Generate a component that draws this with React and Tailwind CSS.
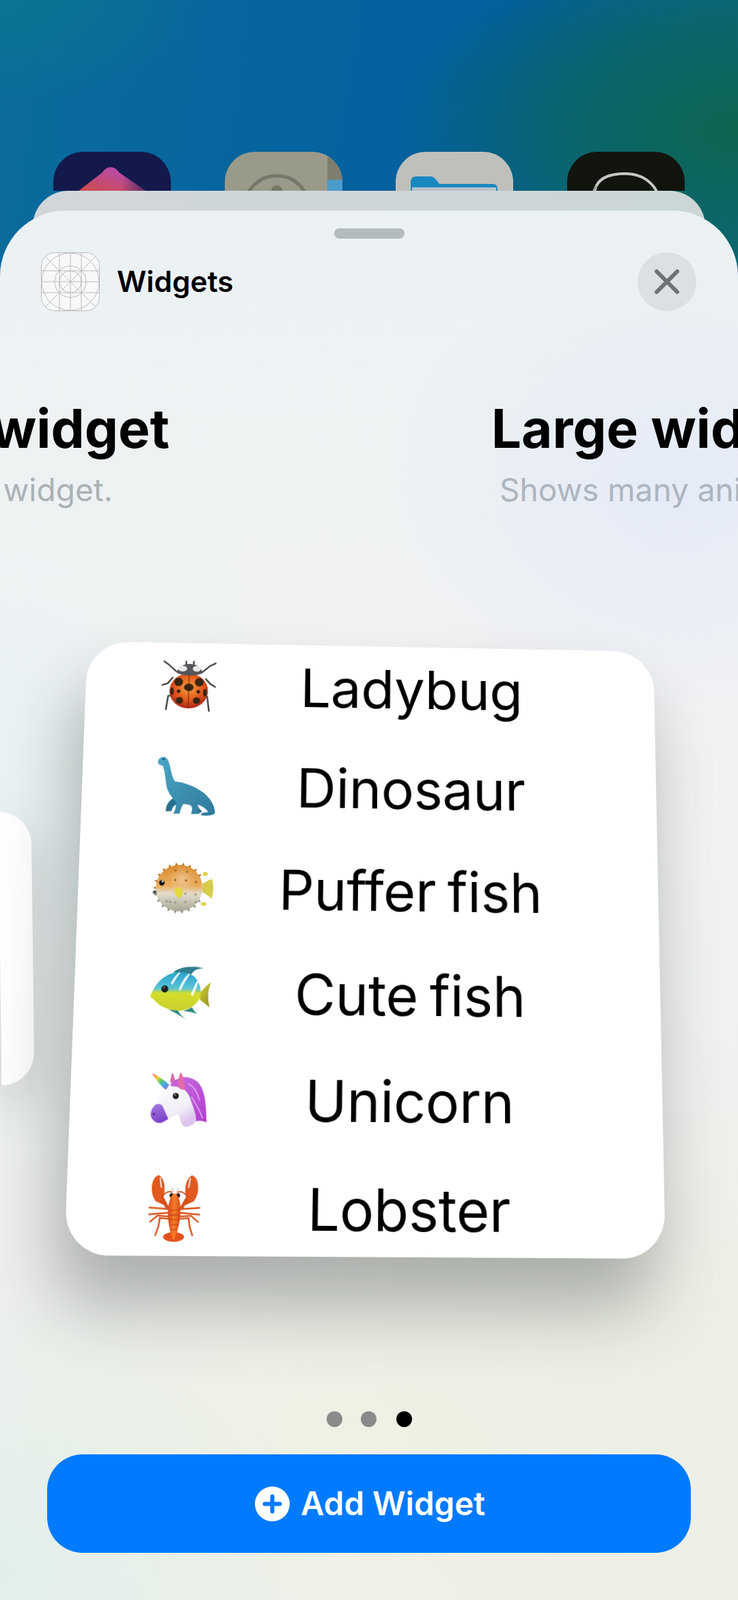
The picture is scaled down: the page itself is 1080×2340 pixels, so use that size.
import React from "react";

function quadMatrix(W, H, q) {
  const [[x0, y0], [x1, y1], [x2, y2], [x3, y3]] = q;
  const dx1 = x1 - x2, dx2 = x3 - x2, sx = x0 - x1 + x2 - x3;
  const dy1 = y1 - y2, dy2 = y3 - y2, sy = y0 - y1 + y2 - y3;
  const den = dx1 * dy2 - dx2 * dy1;
  const g = (sx * dy2 - dx2 * sy) / den;
  const h = (dx1 * sy - sx * dy1) / den;
  const a = (x1 - x0 + g * x1) / W, b = (x3 - x0 + h * x3) / H;
  const d = (y1 - y0 + g * y1) / W, e = (y3 - y0 + h * y3) / H;
  return `matrix3d(${a},${d},0,${g / W},${b},${e},0,${h / H},0,0,1,0,${x0},${y0},0,1)`;
}

const CARD_X = 100, CARD_Y = 940;
const cardTransform = quadMatrix(880, 920, [
  [128 - CARD_X, 938 - CARD_Y],
  [956 - CARD_X, 953 - CARD_Y],
  [974 - CARD_X, 1841 - CARD_Y],
  [94 - CARD_X, 1836 - CARD_Y],
]);

function Ladybug() {
  return (
    <svg width="86" height="84" viewBox="165 98 244 236">
      <defs>
        <radialGradient id="lb" cx="0.5" cy="0.4" r="0.65">
          <stop offset="0" stopColor="#f5a03e" />
          <stop offset="0.55" stopColor="#e2581c" />
          <stop offset="1" stopColor="#a01c10" />
        </radialGradient>
      </defs>
      <g fill="none" stroke="#3e3e3e" strokeWidth="7" strokeLinecap="round" strokeLinejoin="round">
        <path d="M177 107 L198 122 L232 152" />
        <path d="M402 112 L378 124 L345 152" />
        <path d="M172 213 L195 205 L215 180" />
        <path d="M402 218 L380 205 L360 183" />
        <path d="M190 322 L198 262 L214 258" />
        <path d="M377 326 L368 262 L355 258" />
        <path d="M273 118 L273 106 M306 118 L306 106" />
      </g>
      <ellipse cx="287" cy="238" rx="84" ry="78" fill="url(#lb)" />
      <path d="M233 158 C236 130 262 117 288 117 C316 117 342 130 345 158 C320 172 258 172 233 158 Z" fill="#55565a" />
      <ellipse cx="258" cy="138" rx="20" ry="13" fill="#e9e9e9" />
      <ellipse cx="320" cy="138" rx="18" ry="13" fill="#e9e9e9" />
      <path d="M287 165 V314" stroke="#6b1f0e" strokeWidth="3" />
      <g fill="#3a2412">
        <ellipse cx="242" cy="198" rx="19" ry="19" />
        <ellipse cx="332" cy="198" rx="19" ry="19" />
        <ellipse cx="287" cy="222" rx="21" ry="17" />
        <circle cx="243" cy="240" r="8" />
        <circle cx="329" cy="241" r="8" />
        <ellipse cx="214" cy="241" rx="8" ry="17" />
        <ellipse cx="358" cy="245" rx="8" ry="17" />
        <ellipse cx="248" cy="281" rx="16" ry="15" />
        <ellipse cx="322" cy="281" rx="16" ry="15" />
      </g>
    </svg>
  );
}

function Dino() {
  return (
    <svg width="91" height="91" viewBox="148 530 254 256">
      <defs>
        <linearGradient id="dn" x1="0" y1="0" x2="1" y2="1">
          <stop offset="0" stopColor="#4ba5c4" />
          <stop offset="1" stopColor="#2f7a9c" />
        </linearGradient>
      </defs>
      <path d="M190 770 C188 745 200 725 220 712 L240 735 C222 745 215 755 215 768 Z" fill="#256f8e" />
      <path d="M320 740 L345 770 L318 778 Z" fill="#1f5f7c" />
      <path
        d="M150 553 C152 540 165 530 178 533 C192 537 197 555 203 575 C208 600 215 625 226 640 C250 640 285 650 320 668 C362 690 395 725 400 772 C398 785 365 788 340 784 C338 774 350 772 372 770 C360 755 345 745 325 738 C330 752 335 770 335 778 L298 780 C300 768 305 760 298 744 C285 738 272 736 262 738 C256 750 250 768 250 778 L222 780 C230 765 235 745 230 725 C212 705 192 685 188 650 C183 620 180 590 170 570 C160 570 150 566 150 553 Z"
        fill="url(#dn)"
      />
      <circle cx="174" cy="543" r="4" fill="#14303f" />
    </svg>
  );
}

function Puffer() {
  const spikes = [];
  for (let i = 0; i < 22; i++) {
    const t = (i / 22) * Math.PI * 2;
    if (Math.cos(t) > 0.82 && Math.abs(Math.sin(t)) < 0.45) continue;
    const p = (r, o) => `${243 + r * Math.cos(t + o)},${207 + r * Math.sin(t + o)}`;
    spikes.push(
      <polygon key={i} points={`${p(96, -0.09)} ${p(114, 0)} ${p(96, 0.09)}`} fill={Math.sin(t) < 0.1 ? "#b87426" : "#8d8b7c"} />
    );
  }
  const dots = [[225, 172], [272, 173], [315, 180], [225, 130], [275, 135], [205, 268], [228, 270], [272, 268], [315, 235], [270, 232], [190, 265], [318, 268]];
  return (
    <svg width="92" height="79" viewBox="128 94 266 228">
      <defs>
        <linearGradient id="pf" x1="0" y1="0" x2="0" y2="1">
          <stop offset="0" stopColor="#d98b2e" />
          <stop offset="0.45" stopColor="#e9ad5c" />
          <stop offset="0.62" stopColor="#e2dccb" />
          <stop offset="1" stopColor="#a8a695" />
        </linearGradient>
        <radialGradient id="pg" cx="0.55" cy="0.3" r="0.3">
          <stop offset="0" stopColor="#ffffff" stopOpacity="0.35" />
          <stop offset="1" stopColor="#ffffff" stopOpacity="0" />
        </radialGradient>
      </defs>
      {spikes}
      <path d="M345 185 C360 178 372 170 385 165 C394 190 393 225 385 252 C372 240 358 230 345 225 Z" fill="#d6cc4e" />
      <ellipse cx="355" cy="144" rx="11" ry="9" fill="#e3d04a" />
      <ellipse cx="351" cy="276" rx="12" ry="8" fill="#e3d04a" />
      <circle cx="243" cy="207" r="102" fill="url(#pf)" />
      <circle cx="243" cy="207" r="102" fill="url(#pg)" />
      {dots.map(([x, y], i) => (
        <circle key={i} cx={x} cy={y} r="5" fill={y < 200 ? "#a8671e" : "#98958a"} />
      ))}
      <circle cx="167" cy="185" r="12" fill="#0b0b0b" />
      <circle cx="170" cy="179" r="4" fill="#fff" />
      <circle cx="137" cy="227" r="8" fill="#55544e" />
      <path d="M222 212 C232 200 252 205 260 222 C258 240 248 254 242 252 C232 245 222 228 222 212 Z" fill="#e6d93f" />
    </svg>
  );
}

function CuteFish() {
  return (
    <svg width="92" height="81" viewBox="115 549 266 234">
      <defs>
        <linearGradient id="cf" x1="0" y1="0" x2="0" y2="1">
          <stop offset="0" stopColor="#28a3d0" />
          <stop offset="0.42" stopColor="#58c4d6" />
          <stop offset="0.55" stopColor="#d5de2c" />
          <stop offset="1" stopColor="#c9cf2c" />
        </linearGradient>
        <linearGradient id="cf2" x1="0" y1="0" x2="1" y2="1">
          <stop offset="0" stopColor="#d6d62e" />
          <stop offset="1" stopColor="#8f8a22" />
        </linearGradient>
      </defs>
      <path d="M215 578 C240 555 300 545 345 560 C320 560 300 568 290 592 Z" fill="#2f7f8e" />
      <path d="M330 668 C345 650 362 632 378 620 C368 650 362 680 375 728 C360 715 345 705 332 695 Z" fill="url(#cf2)" />
      <path d="M198 738 C225 750 250 765 277 781 C260 770 245 755 240 742 Z" fill="#2d8a80" />
      <path d="M262 745 C285 745 305 750 322 756 C312 748 305 738 300 728 Z" fill="#2d8a80" />
      <path
        d="M118 682 C130 650 150 615 180 597 C215 572 270 570 305 595 C328 615 338 650 335 675 C330 705 300 735 255 742 C205 746 155 725 130 692 C125 690 120 688 118 682 Z"
        fill="url(#cf)"
      />
      <g fill="#ffffff" opacity="0.85">
        <path d="M205 625 C215 605 225 590 240 578 L246 580 C232 598 222 615 213 632 Z" />
        <path d="M240 652 C250 625 262 600 282 582 L288 586 C272 608 258 632 250 656 Z" />
        <path d="M292 672 C300 655 308 630 320 612 L325 620 C318 640 310 662 302 680 Z" />
      </g>
      <circle cx="180" cy="650" r="15" fill="#1c1c1c" />
      <circle cx="177" cy="645" r="4" fill="#777" />
    </svg>
  );
}

function Unicorn() {
  return (
    <svg width="84" height="82" viewBox="119 115 244 236" className="overflow-visible">
      <defs>
        <linearGradient id="uh" x1="0" y1="0" x2="1" y2="1">
          <stop offset="0" stopColor="#f26a5e" />
          <stop offset="0.3" stopColor="#f1c93c" />
          <stop offset="0.5" stopColor="#58c96e" />
          <stop offset="0.7" stopColor="#45a7e6" />
          <stop offset="1" stopColor="#b25bd6" />
        </linearGradient>
        <linearGradient id="uf" x1="0" y1="0" x2="0.6" y2="1">
          <stop offset="0" stopColor="#ffffff" />
          <stop offset="0.7" stopColor="#f2eef8" />
          <stop offset="1" stopColor="#dcc4ec" />
        </linearGradient>
        <linearGradient id="um" x1="0" y1="0" x2="1" y2="1">
          <stop offset="0" stopColor="#c56ae0" />
          <stop offset="1" stopColor="#b13fd0" />
        </linearGradient>
        <linearGradient id="un" x1="0" y1="0" x2="0.4" y2="1">
          <stop offset="0" stopColor="#a67ee6" />
          <stop offset="1" stopColor="#7e42c8" />
        </linearGradient>
      </defs>
      <path d="M128 122 C155 132 182 150 204 170 L190 192 C165 172 145 148 128 122 Z" fill="url(#uh)" />
      <path d="M207 160 C208 140 212 125 216 118 C224 128 228 145 228 165 Z" fill="#d96ea8" />
      <path d="M232 150 C252 130 300 132 328 160 C356 190 364 240 367 328 C352 318 338 322 322 322 C310 290 290 240 260 195 Z" fill="url(#um)" />
      <path d="M140 262 C155 225 180 190 212 178 C245 168 285 190 298 235 C310 265 325 300 322 322 C310 340 290 350 272 346 C258 335 254 315 248 295 C225 295 205 315 180 328 C160 338 135 325 128 300 C126 285 132 272 140 262 Z" fill="url(#uf)" />
      <path d="M140 262 C150 248 165 248 176 258 C186 275 196 300 204 314 C195 320 188 324 180 328 C160 338 135 325 128 300 C126 285 132 272 140 262 Z" fill="url(#un)" />
      <path d="M208 175 C215 155 225 145 240 148 L268 185 L238 178 Z" fill="#c35fd8" />
      <path d="M240 178 C240 150 246 128 251 117 C262 130 272 158 272 190 C262 192 250 188 240 178 Z" fill="#e06aa8" />
      <circle cx="233" cy="217" r="13" fill="#202024" />
      <circle cx="230" cy="212" r="4" fill="#8a8a92" />
      <circle cx="141" cy="294" r="5" fill="#4d2682" />
      <path d="M285 165 C310 175 325 200 335 235 M300 220 C315 245 335 270 350 310" stroke="#e4a6f0" strokeWidth="5" fill="none" />
    </svg>
  );
}

function LobsterHalf() {
  return (
    <g>
      <path d="M178 695 L145 680 M190 712 L150 640" stroke="#d4501c" strokeWidth="14" strokeLinecap="round" />
      <path d="M150 578 C172 590 180 620 176 652 C172 680 158 692 142 686 C122 668 118 625 128 600 C133 588 142 580 150 578 Z" fill="#e2581d" />
      <path d="M157 590 L163 630" stroke="#fff" strokeWidth="5" />
      <path d="M210 650 C195 640 180 650 165 668" stroke="#c9471a" strokeWidth="5" fill="none" />
      <g stroke="#d8551f" strokeWidth="7" fill="none" strokeLinecap="round">
        <path d="M195 718 L115 712" />
        <path d="M195 733 L115 740" />
        <path d="M195 748 L150 745 L120 770" />
        <path d="M195 758 L160 755 L155 790 L143 825" />
      </g>
      <circle cx="207" cy="662" r="9" fill="#2a1a14" />
      <path d="M212 632 C204 628 206 640 215 645" stroke="#d9b0a4" strokeWidth="3" fill="none" />
    </g>
  );
}

function Lobster() {
  return (
    <svg width="76" height="95" viewBox="112 578 218 274">
      <defs>
        <linearGradient id="lo" x1="0" y1="0" x2="1" y2="0">
          <stop offset="0" stopColor="#d9471a" />
          <stop offset="0.5" stopColor="#f57f27" />
          <stop offset="1" stopColor="#d9471a" />
        </linearGradient>
      </defs>
      <LobsterHalf />
      <g transform="translate(441 0) scale(-1 1)">
        <LobsterHalf />
      </g>
      <ellipse cx="220" cy="832" rx="44" ry="20" fill="#e2501c" />
      <path d="M220 652 C240 660 248 700 246 740 C244 780 232 830 220 846 C208 830 196 780 194 740 C192 700 200 660 220 652 Z" fill="url(#lo)" />
      <path d="M197 722 H243 M195 742 H245 M198 762 H242 M202 782 H238 M207 802 H233" stroke="#c23c14" strokeWidth="3" />
    </svg>
  );
}

function GridIcon() {
  return (
    <svg width="86" height="86" viewBox="0 0 86 86" fill="none" stroke="#bcbcbc" strokeWidth="1">
      <rect x="0.5" y="0.5" width="85" height="85" rx="20" fill="#f7f8f9" />
      <path d="M27 1V85M43 1V85M59 1V85M1 27H85M1 43H85M1 59H85" />
      <path d="M6 6L80 80M80 6L6 80" />
      <circle cx="43" cy="43" r="42" />
      <circle cx="43" cy="43" r="23" />
      <circle cx="43" cy="43" r="16" />
    </svg>
  );
}

const rows = [
  ["Ladybug", <Ladybug />],
  ["Dinosaur", <Dino />],
  ["Puffer fish", <Puffer />],
  ["Cute fish", <CuteFish />],
  ["Unicorn", <Unicorn />],
  ["Lobster", <Lobster />],
];

export default function App() {
  return (
    <div className="w-[1080px] h-[2340px] overflow-hidden flex flex-col font-['Inter',sans-serif] bg-[radial-gradient(ellipse_500px_280px_at_100%_190px,#0d6650_0%,#0d665080_60%,transparent),radial-gradient(ellipse_300px_150px_at_0%_0%,#0a7592,transparent),linear-gradient(100deg,#0a6c9c_0%,#045f9f_50%,#146a74_100%)]">
      <div className="pt-[222px] px-[78px] shrink-0">
        <div className="h-[57px] overflow-hidden flex justify-between">
          <div className="w-[172px] h-[172px] rounded-[44px] bg-[#13194a]">
            <svg width="172" height="172" viewBox="0 0 172 172">
              <defs>
                <linearGradient id="sc" x1="0.6" y1="0.1" x2="0.3" y2="0.5">
                  <stop offset="0" stopColor="#b84aa8" />
                  <stop offset="1" stopColor="#d04c46" />
                </linearGradient>
                <linearGradient id="sd" x1="0.55" y1="0" x2="0.75" y2="0">
                  <stop offset="0" stopColor="#13194a" stopOpacity="0" />
                  <stop offset="1" stopColor="#13194a" stopOpacity="0.75" />
                </linearGradient>
              </defs>
              <path d="M72 30 C78 20 90 20 96 30 L197 100 L-18 100 Z" fill="url(#sc)" />
              <path d="M72 30 C78 20 90 20 96 30 L197 100 L-18 100 Z" fill="url(#sd)" />
            </svg>
          </div>
          <div className="w-[172px] h-[172px] rounded-[44px] bg-[#9a9a8b] overflow-hidden">
            <svg width="172" height="172" viewBox="0 0 172 172">
              <path d="M150 0 C165 4 172 20 172 44 V60 H150 Z" fill="#7f7e6e" />
              <rect x="150" y="41" width="22" height="20" fill="#4a9ccb" />
              <circle cx="76" cy="82" r="47" fill="none" stroke="#77776a" strokeWidth="5" />
              <circle cx="76" cy="57" r="8" fill="#77776a" />
            </svg>
          </div>
          <div className="w-[172px] h-[172px] rounded-[44px] bg-[#bfc0bc]">
            <svg width="172" height="172" viewBox="0 0 172 172">
              <path d="M22 44 C22 39 25 36 30 36 H50 C55 36 57 38 60 42 L64 47 H142 C147 47 149 50 149 54 V60 H22 Z" fill="#1a88c0" />
              <rect x="24" y="52" width="123" height="8" fill="#b7c2c9" />
            </svg>
          </div>
          <div className="w-[172px] h-[172px] rounded-[44px] bg-[#12140e]">
            <svg width="172" height="172" viewBox="0 0 172 172">
              <path d="M40 60 C42 40 58 32 85 32 C110 32 125 45 132 60" fill="none" stroke="#c8c8c2" strokeWidth="4" />
              <path d="M43 50 C38 55 38 58 42 60" fill="none" stroke="#9a9a94" strokeWidth="3" />
            </svg>
          </div>
        </div>
      </div>

      <div className="flex-1 mx-[48px] rounded-t-[52px] bg-[linear-gradient(90deg,#d1d6db,#cbd6d6)] pt-[29px] flex flex-col min-h-0">
        <div className="flex-1 -mx-[48px] rounded-t-[96px] flex flex-col bg-[radial-gradient(ellipse_430px_360px_at_92%_20%,#e5ebf7,transparent),radial-gradient(ellipse_450px_600px_at_0%_42%,#e9f2f3,transparent),radial-gradient(ellipse_700px_600px_at_100%_85%,#ecefe3,transparent),radial-gradient(ellipse_500px_450px_at_0%_98%,#e2efe9,transparent),radial-gradient(ellipse_800px_450px_at_50%_90%,#eff1e2,transparent),linear-gradient(180deg,#ebf1f3,#f1f2f3_35%,#eef0ef)]">
          <div className="pt-[26px] flex justify-center">
            <div className="w-[103px] h-[15px] rounded-full bg-[#b4bbbe]" />
          </div>

          <div className="mt-[20px] pl-[60px] pr-[61px] h-[86px] flex items-center">
            <GridIcon />
            <span className="ml-[25px] text-[42.5px] leading-none font-semibold text-black">Widgets</span>
            <div className="ml-auto w-[86px] h-[86px] rounded-full bg-[#dbe1e3] flex items-center justify-center">
              <svg width="38" height="38" viewBox="0 0 38 38" fill="none" stroke="#6d7276" strokeWidth="6" strokeLinecap="round">
                <path d="M4 4L34 34M34 4L4 34" />
              </svg>
            </div>
          </div>

          <div className="mt-[133px] flex whitespace-nowrap">
            <div className="w-[248px] flex justify-end shrink-0">
              <span className="text-[78px] leading-[78px] font-bold text-black">Medium widget</span>
            </div>
            <span className="ml-[471px] text-[78px] leading-[78px] font-bold text-black">Large widget</span>
          </div>
          <div className="mt-[27px] flex whitespace-nowrap">
            <div className="w-[165px] flex justify-end shrink-0">
              <span className="text-[46px] leading-[46px] text-[#aab2b6]">Shows a medium widget.</span>
            </div>
            <span className="ml-[566px] text-[46px] leading-[46px] text-[#adb5c0]">Shows many animals.</span>
          </div>

          <div className="mt-[201px] h-[920px] flex items-start">
            <div className="mt-[247px] w-[48px] h-[400px] shrink-0 bg-white rounded-r-[50px] -rotate-[0.7deg] shadow-[0_30px_80px_rgba(0,0,0,0.2)]" />
            <div
              className="ml-[52px] w-[880px] h-[920px] shrink-0 origin-top-left bg-white rounded-[64px] overflow-hidden flex flex-col justify-center shadow-[-14px_70px_100px_rgba(30,40,40,0.33)]"
              style={{ transform: cardTransform }}
            >
              {rows.map(([label, icon]) => (
                <div key={label} className="h-[157px] shrink-0 grid grid-cols-[316px_372px] items-center text-black">
                  <div className="flex justify-center">{icon}</div>
                  <div className="flex justify-center whitespace-nowrap text-[84px] leading-none tracking-[-0.3px] [word-spacing:-6px]">{label}</div>
                </div>
              ))}
            </div>
          </div>

          <div className="mt-[204px] flex justify-center items-center gap-[27px]">
            <div className="w-[23px] h-[23px] rounded-full bg-[#8a8a8a]" />
            <div className="w-[23px] h-[23px] rounded-full bg-[#8a8a8a]" />
            <div className="w-[23px] h-[23px] rounded-full bg-black ml-[2px]" />
          </div>

          <div className="mt-[40px] mx-[69px] h-[144px] rounded-[52px] bg-[#007aff] flex items-center justify-center gap-[16px] pl-[3px]">
            <svg width="51" height="51" viewBox="0 0 51 51">
              <circle cx="25.5" cy="25.5" r="25.5" fill="#fff" />
              <path d="M25.5 14.5V36.5M14.5 25.5H36.5" stroke="#007aff" strokeWidth="6" strokeLinecap="round" />
            </svg>
            <span className="text-[47.5px] leading-none font-semibold text-white">Add Widget</span>
          </div>
        </div>
      </div>
    </div>
  );
}
